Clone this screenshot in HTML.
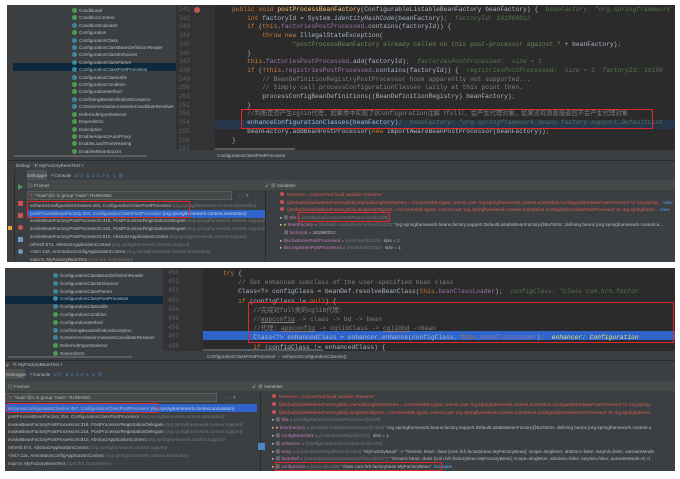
<!DOCTYPE html>
<html><head><meta charset="utf-8"><style>
*{margin:0;padding:0;box-sizing:border-box}
body{width:680px;height:479px;background:#fff;position:relative;overflow:hidden;font-family:"Liberation Sans","Noto Sans CJK SC",sans-serif}
.a{position:absolute}
.code{font-family:"Liberation Mono","Noto Sans CJK SC",monospace;font-size:6.3px;color:#a9b7c6;white-space:pre;line-height:8px}
.k{color:#cc7832}.c{color:#808080}.s{color:#6a8759}.v{color:#56744f;font-style:italic}.f{color:#9876aa}
.ln{font-family:"Liberation Mono",monospace;font-size:6px;color:#606366;white-space:pre}
.t{font-size:4.6px;color:#bbbbbb;white-space:pre;line-height:7px}
.g{color:#787878;font-style:italic}
.r{border:1.3px solid #e0282a}
.dot{display:inline-block;width:5px;height:5px;border-radius:50%;background:#3e86a0;margin-right:2px;vertical-align:-1px}
.dg{background:#499c54}
.e{color:#e05a4e}
.rd{display:inline-block;width:4px;height:4px;border-radius:50%;background:#c75450;margin-right:3px}
</style></head><body>

<!-- ============ TOP SCREENSHOT ============ -->
<div class="a" style="left:7px;top:5px;width:668px;height:257px;background:#3c3f41"></div>
<div class="a" style="left:7px;top:5px;width:169px;height:152px;background:#3c3f41"></div>
<div class="a" style="left:13px;top:63px;width:163px;height:8px;background:#0d293e"></div>
<div class="a t" style="left:72px;top:7px;line-height:7.4px"><span class="dot dg"></span>Conditional
<span class="dot dg"></span>ConditionContext
<span class="dot"></span>ConditionEvaluator
<span class="dot dg"></span>Configuration
<span class="dot"></span>ConfigurationClass
<span class="dot"></span>ConfigurationClassBeanDefinitionReader
<span class="dot"></span>ConfigurationClassEnhancer
<span class="dot"></span>ConfigurationClassParser
<span class="dot"></span>ConfigurationClassPostProcessor
<span class="dot"></span>ConfigurationClassUtils
<span class="dot dg"></span>ConfigurationCondition
<span class="dot dg"></span>ConfigurationMethod
<span class="dot"></span>ConflictingBeanDefinitionException
<span class="dot"></span>ContextAnnotationAutowireCandidateResolver
<span class="dot dg"></span>DeferredImportSelector
<span class="dot dg"></span>DependsOn
<span class="dot dg"></span>Description
<span class="dot dg"></span>EnableAspectJAutoProxy
<span class="dot dg"></span>EnableLoadTimeWeaving
<span class="dot dg"></span>EnableMBeanExport</div>
<div class="a" style="left:14px;top:155px;width:133px;height:2px;background:#5a5d5f"></div>
<div class="a" style="left:176px;top:5px;width:499px;height:145px;background:#2b2b2b"></div>
<div class="a" style="left:176px;top:5px;width:39px;height:145px;background:#313335"></div>
<div class="a" style="left:215px;top:120px;width:460px;height:9px;background:#26374c"></div>
<div class="a ln" style="left:179px;top:6px;line-height:8.7px">241
242
243
244
245
246
247
248
249
250
251
252
253
254
255
256
257</div>
<div class="a" style="left:194px;top:7px;width:6px;height:6px;border-radius:50%;background:#c75450"></div>
<div class="a code" style="left:232px;top:6px;line-height:8.7px"><span class="k">public void </span><span style="color:#ffc66d">postProcessBeanFactory</span>(ConfigurableListableBeanFactory beanFactory) {  <span class="v">beanFactory: "org.springframework</span>
    <span class="k">int </span>factoryId = System.<i>identityHashCode</i>(beanFactory)<span class="k">;</span>  <span class="v">factoryId: 161960012</span>
    <span class="k">if </span>(<span class="k">this</span>.<span class="f">factoriesPostProcessed</span>.contains(factoryId)) {
        <span class="k">throw new </span>IllegalStateException(
                <span class="s">"postProcessBeanFactory already called on this post-processor against "</span> + beanFactory)<span class="k">;</span>
    }
    <span class="k">this</span>.<span class="f">factoriesPostProcessed</span>.add(factoryId)<span class="k">;</span>  <span class="v">factoriesPostProcessed:  size = 1</span>
    <span class="k">if </span>(!<span class="k">this</span>.<span class="f">registriesPostProcessed</span>.contains(factoryId)) {  <span class="v">registriesPostProcessed:  size = 1  factoryId: 16196</span>
        <span class="c">// BeanDefinitionRegistryPostProcessor hook apparently not supported...</span>
        <span class="c">// Simply call processConfigurationClasses lazily at this point then.</span>
        processConfigBeanDefinitions((BeanDefinitionRegistry) beanFactory)<span class="k">;</span>
    }
    <span class="c">//判断是否产生cglib代理，如果类中实现了@Configuration注解（full），会产生代理对象，如果没有则直接返回不会产生代理对象</span>
    enhanceConfigurationClasses(beanFactory)<span class="k">;</span>  <span class="v">beanFactory: "org.springframework.beans.factory.support.DefaultList</span>
    beanFactory.addBeanPostProcessor(<span class="k">new </span>ImportAwareBeanPostProcessor(beanFactory))<span class="k">;</span>
}</div>
<div class="a r" style="left:241px;top:109px;width:412px;height:20px"></div>
<div class="a" style="left:176px;top:150px;width:499px;height:10px;background:#3c3f41"></div>
<div class="a" style="left:215px;top:148px;width:80px;height:2px;background:#5a5d5f"></div>
<div class="a t" style="left:217px;top:152px">ConfigurationClassPostProcessor</div>
<div class="a" style="left:7px;top:160px;width:668px;height:10px;background:#3c3f41;border-top:1px solid #2b2b2b"></div>
<div class="a t" style="left:16px;top:162px">Debug:  <span style="color:#bbb">▣ MyFactoryBeanTest ×</span></div>
<div class="a" style="left:7px;top:170px;width:668px;height:10px;background:#3c3f41"></div>
<div class="a" style="left:26px;top:170px;width:21px;height:10px;background:#4e5254"></div>
<div class="a t" style="left:27px;top:172px">Debugger  <span style="color:#4a88c7">▣</span>Console  <span style="color:#4a88c7">⇲ ▤  ⇊ ⇓ ⇓ ⇗ ↳ ↘  ▦ ⋮</span></div>
<div class="a" style="left:15px;top:180px;width:660px;height:10px;background:#45494a"></div>
<div class="a t" style="left:28px;top:182px">▤ Frames</div>
<div class="a t" style="left:265px;top:182px">↙ ▦ Variables</div>
<div class="a" style="left:7px;top:170px;width:8px;height:92px;background:#3c3f41;border-right:1px solid #2b2b2b"></div>
<div class="a" style="left:15px;top:170px;width:12px;height:92px;background:#3c3f41"></div>
<div class="a" style="left:18px;top:184px;width:0;height:0;border-left:5px solid #499c54;border-top:3px solid transparent;border-bottom:3px solid transparent"></div>
<div class="a" style="left:18px;top:201px;width:5px;height:5px;background:#c75450"></div>
<div class="a" style="left:18px;top:213px;width:5px;height:5px;background:#c75450;border-radius:1px"></div>
<div class="a" style="left:18px;top:225px;width:5px;height:5px;background:#c75450;border-radius:50%"></div>
<div class="a" style="left:18px;top:237px;width:5px;height:5px;background:#6e9bc5"></div>
<div class="a" style="left:18px;top:249px;width:5px;height:5px;background:#6e9bc5;border-radius:50%"></div>
<div class="a" style="left:8px;top:226px;width:4px;height:4px;background:#e8a93b"></div>
<div class="a" style="left:27px;top:191px;width:205px;height:9px;background:#45494a;border:1px solid #5a5d5f"></div>
<div class="a t" style="left:29px;top:192px"><span style="color:#c75450">▣</span> "main"@1 in group "main": RUNNING</div>
<div class="a t" style="left:238px;top:192px;color:#4a88c7">↑ ↓ ▼</div>
<div class="a" style="left:27px;top:210px;width:238px;height:8px;background:#2f65ca"></div>
<div class="a t" style="left:30px;top:202px;line-height:7.7px">enhanceConfigurationClasses:453, ConfigurationClassPostProcessor <span class="g">(org.springframework.context.annotation)</span>
postProcessBeanFactory:254, ConfigurationClassPostProcessor <span class="g" style="color:#c4d0ea">(org.springframework.context.annotation)</span>
invokeBeanFactoryPostProcessors:318, PostProcessorRegistrationDelegate <span class="g">(org.springframework.context.support)</span>
invokeBeanFactoryPostProcessors:154, PostProcessorRegistrationDelegate <span class="g">(org.springframework.context.support)</span>
invokeBeanFactoryPostProcessors:810, AbstractApplicationContext <span class="g">(org.springframework.context.support)</span>
refresh:574, AbstractApplicationContext <span class="g">(org.springframework.context.support)</span>
&lt;init&gt;:116, AnnotationConfigApplicationContext <span class="g">(org.springframework.context.annotation)</span>
main:9, MyFactoryBeanTest <span class="g">(com.hrh.factorybean)</span></div>
<div class="a r" style="left:27px;top:201px;width:163px;height:17px"></div>
<div class="a" style="left:265px;top:190px;width:1px;height:72px;background:#2b2b2b"></div>
<div class="a t" style="left:280px;top:191px;line-height:7.6px"><span class="rd"></span><span class="e">resource = Cannot find local variable 'resource'</span>
<span class="rd"></span><span class="e">((DefaultListableBeanFactory)this).manualSingletonNames = Inconvertible types; cannot cast 'org.springframework.context.annotation.ConfigurationClassPostProcessor' to 'org.spring...</span> <span style="color:#589df6">View</span>
<span class="rd"></span><span class="e">((DefaultListableBeanFactory)this).singletonObjects = Inconvertible types; cannot cast 'org.springframework.context.annotation.ConfigurationClassPostProcessor' to 'org.springframe...</span> <span style="color:#589df6">View</span>
▸ ▦ <span style="color:#c77dbb">this</span> = <span class="g">{ConfigurationClassPostProcessor@1205}</span>
▸ <span style="color:#e8a93b">●</span> <span style="color:#c77dbb">beanFactory</span> = <span class="g">{DefaultListableBeanFactory@1103}</span> "org.springframework.beans.factory.support.DefaultListableBeanFactory@6a7504c: defining beans [org.springframework.context.a...
   ▦ <span style="color:#c77dbb">factoryId</span> = 161960012
▸ <span style="color:#c77dbb">this.factoriesPostProcessed</span> = <span class="g">{HashSet@1204}</span>  size = 1
▸ <span style="color:#c77dbb">this.registriesPostProcessed</span> = <span class="g">{HashSet@1203}</span>  size = 1</div>
<div class="a r" style="left:298px;top:212px;width:92px;height:10px"></div>

<!-- ============ BOTTOM SCREENSHOT ============ -->
<div class="a" style="left:5px;top:268px;width:670px;height:203px;background:#3c3f41"></div>
<div class="a" style="left:5px;top:296px;width:158px;height:8px;background:#0d293e"></div>
<div class="a t" style="left:53px;top:272px;line-height:7.8px"><span class="dot"></span>ConfigurationClassBeanDefinitionReader
<span class="dot"></span>ConfigurationClassEnhancer
<span class="dot"></span>ConfigurationClassParser
<span class="dot"></span>ConfigurationClassPostProcessor
<span class="dot"></span>ConfigurationClassUtils
<span class="dot dg"></span>ConfigurationCondition
<span class="dot dg"></span>ConfigurationMethod
<span class="dot"></span>ConflictingBeanDefinitionException
<span class="dot"></span>ContextAnnotationAutowireCandidateResolver
<span class="dot dg"></span>DeferredImportSelector
<span class="dot dg"></span>DependsOn</div>
<div class="a" style="left:8px;top:356px;width:124px;height:2px;background:#5a5d5f"></div>
<div class="a" style="left:163px;top:268px;width:512px;height:83px;background:#2b2b2b"></div>
<div class="a" style="left:163px;top:268px;width:40px;height:83px;background:#313335"></div>
<div class="a" style="left:203px;top:331px;width:472px;height:9px;background:#2f65ca"></div>
<div class="a ln" style="left:168px;top:268px;line-height:9.2px">450
451
452
453
454
455
456
457
458</div>
<div class="a code" style="left:223px;top:269px;line-height:9.2px"><span class="k">try </span>{
    <span class="c">// Set enhanced subclass of the user-specified bean class</span>
    Class&lt;?&gt; configClass = beanDef.resolveBeanClass(<span class="k">this</span>.<span class="f">beanClassLoader</span>)<span class="k">;</span>  <span class="v">configClass: "class com.hrh.factor</span>
    <span class="k">if </span>(configClass != <span class="k">null</span>) {
        <span class="c">//完成对full类的cglib代理:</span>
        <span class="c">//<u>appconfig</u> -&gt; class -&gt; bd -&gt; bean</span>
        <span class="c">//代理: <u>appconfig</u> -&gt; cglibClass -&gt; <u>cglibbd</u> -&gt;bean</span>
        Class&lt;?&gt; enhancedClass = enhancer.enhance(configClass, <span class="k">this</span>.<span class="f">beanClassLoader</span>)<span class="k">;</span>  <span style="color:#e8e36b;font-style:italic">enhancer: Configuration</span>
        <span class="k">if </span>(configClass != enhancedClass) {</div>
<div class="a r" style="left:248px;top:302px;width:426px;height:41px"></div>
<div class="a" style="left:163px;top:351px;width:512px;height:9px;background:#3c3f41"></div>
<div class="a" style="left:203px;top:349px;width:120px;height:2px;background:#5a5d5f"></div>
<div class="a t" style="left:207px;top:353px">ConfigurationClassPostProcessor  ›  enhanceConfigurationClasses()</div>
<div class="a" style="left:5px;top:360px;width:670px;height:9px;background:#3c3f41;border-top:1px solid #2b2b2b"></div>
<div class="a t" style="left:6px;top:361px">g:  <span>▣ MyFactoryBeanTest ×</span></div>
<div class="a" style="left:5px;top:369px;width:20px;height:10px;background:#4e5254"></div>
<div class="a t" style="left:6px;top:371px">Debugger  <span style="color:#4a88c7">▣</span>Console  <span style="color:#4a88c7">⇲ ▤  ⇊ ⇓ ⇓ ⇗ ↳ ↘  ▦ ⋮</span></div>
<div class="a" style="left:5px;top:381px;width:670px;height:10px;background:#45494a"></div>
<div class="a t" style="left:8px;top:383px">▤ Frames</div>
<div class="a t" style="left:252px;top:383px">↙ ▦ Variables</div>
<div class="a" style="left:5px;top:393px;width:212px;height:9px;background:#45494a;border:1px solid #5a5d5f"></div>
<div class="a t" style="left:8px;top:394px"><span style="color:#c75450">▣</span> "main"@1 in group "main": RUNNING</div>
<div class="a t" style="left:225px;top:394px;color:#4a88c7">↑ ↓ ▼</div>
<div class="a" style="left:5px;top:404px;width:252px;height:8px;background:#2f65ca"></div>
<div class="a t" style="left:8px;top:405px;line-height:7.8px">enhanceConfigurationClasses:457, ConfigurationClassPostProcessor <span class="g" style="color:#c4d0ea">(org.springframework.context.annotation)</span>
postProcessBeanFactory:254, ConfigurationClassPostProcessor <span class="g">(org.springframework.context.annotation)</span>
invokeBeanFactoryPostProcessors:318, PostProcessorRegistrationDelegate <span class="g">(org.springframework.context.support)</span>
invokeBeanFactoryPostProcessors:154, PostProcessorRegistrationDelegate <span class="g">(org.springframework.context.support)</span>
invokeBeanFactoryPostProcessors:810, AbstractApplicationContext <span class="g">(org.springframework.context.support)</span>
refresh:574, AbstractApplicationContext <span class="g">(org.springframework.context.support)</span>
&lt;init&gt;:116, AnnotationConfigApplicationContext <span class="g">(org.springframework.context.annotation)</span>
main:9, MyFactoryBeanTest <span class="g">(com.hrh.factorybean)</span></div>
<div class="a r" style="left:7px;top:403px;width:151px;height:10px"></div>
<div class="a" style="left:260px;top:391px;width:1px;height:80px;background:#2b2b2b"></div>
<div class="a" style="left:258px;top:443px;width:7px;height:7px;background:#4a88c7"></div>
<div class="a t" style="left:272px;top:393px;line-height:7.8px"><span class="rd"></span><span class="e">resource = Cannot find local variable 'resource'</span>
<span class="rd"></span><span class="e">((DefaultListableBeanFactory)this).manualSingletonNames = Inconvertible types; cannot cast 'org.springframework.context.annotation.ConfigurationClassPostProcessor' to 'org.spring</span>
<span class="rd"></span><span class="e">((DefaultListableBeanFactory)this).singletonObjects = Inconvertible types; cannot cast 'org.springframework.context.annotation.ConfigurationClassPostProcessor' to 'org.springframew</span>
▸ ▦ <span style="color:#c77dbb">this</span> = <span class="g">{ConfigurationClassPostProcessor@1205}</span>
▸ <span style="color:#e8a93b">●</span> <span style="color:#c77dbb">beanFactory</span> = <span class="g">{DefaultListableBeanFactory@1103}</span> "org.springframework.beans.factory.support.DefaultListableBeanFactory@6a7504c: defining beans [org.springframework.context.a
▸ ▦ <span style="color:#c77dbb">configBeanDefs</span> = <span class="g">{LinkedHashMap@1276}</span>  size = 1
▸ ▦ <span style="color:#c77dbb">enhancer</span> = <span class="g">{ConfigurationClassEnhancer@1459}</span>
▸ ▦ <span style="color:#c77dbb">entry</span> = <span class="g">{LinkedHashMap$Entry@1463}</span> "MyFactoryBean" -&gt; "Generic bean: class [com.hrh.factorybean.MyFactoryBean]; scope=singleton; abstract=false; lazyInit=false; autowireMode
▸ ▦ <span style="color:#c77dbb">beanDef</span> = <span class="g">{AnnotatedGenericBeanDefinition@1277}</span> "Generic bean: class [com.hrh.factorybean.MyFactoryBean]; scope=singleton; abstract=false; lazyInit=false; autowireMode=0; d
▸ ▦ <span style="color:#c77dbb">configClass</span> = <span class="g">{Class@1208}</span> "class com.hrh.factorybean.MyFactoryBean"  <span style="color:#589df6">Navigate</span></div>
<div class="a r" style="left:275px;top:462px;width:167px;height:9px"></div>
</body></html>
